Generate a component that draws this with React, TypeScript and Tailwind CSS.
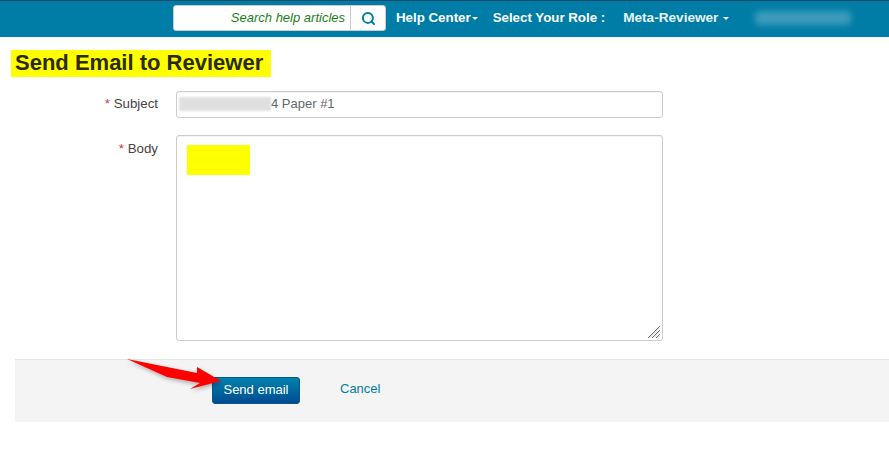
import { Search } from 'lucide-react';

function Caret() {
  return <span className="ml-[1px] inline-block h-0 w-0 border-x-[3px] border-t-[3px] border-x-transparent border-t-white align-middle" />;
}

export default function App() {
  return (
    <div className="relative h-[449px] w-[889px] overflow-hidden bg-white font-['Liberation_Sans',Arial,sans-serif] text-[13px] text-[#333]">
      <header className="flex h-[37px] items-center border-t border-t-[#1d4a68] bg-[#007da6] pb-[2px] pl-[173px] text-white shadow-[0_1px_3px_rgba(0,0,0,0.08)]">
        <div className="flex h-[26px] w-[213px] overflow-hidden rounded-[3px] border border-[#ccc] bg-white">
          <div className="flex-1 pr-[5px] text-right text-[13px] leading-[23px] text-[#1a7f1a] italic">Search help articles</div>
          <div className="flex w-[35px] items-center justify-center border-l border-[#ccc]">
            <Search size={15} strokeWidth={3.2} className="text-[#007da6]" />
          </div>
        </div>
        <span className="ml-[10px] text-[13.3px] font-bold">Help Center<Caret /></span>
        <span className="ml-[15px] text-[13.3px] font-bold">Select Your Role :</span>
        <span className="ml-[18px] text-[13.6px] font-bold text-[#e6f4fa]">Meta-Reviewer <Caret /></span>
        <span className="ml-[26px] h-[14px] w-[96px] rounded-sm bg-[#3d9bbb] blur-[3px]" />
      </header>

      <div className="pt-[13px] pl-[11px]">
        <h1 className="h-[27px] w-[260px] bg-[#ffff00] pl-[4px] text-[22px] leading-[26px] font-bold whitespace-nowrap text-[#2b2b00]">Send Email to Reviewer</h1>
      </div>

      <div className="mt-[14px] flex">
        <label className="w-[158px] pt-[4px] text-right text-[13.3px] leading-[17px] text-[#444]"><span className="text-[#b94a48]">*</span> Subject</label>
        <div className="ml-[18px] flex h-[27px] w-[487px] items-center rounded-[3px] border border-[#ccc] pb-[1px] pl-[2px] text-[#666] shadow-[inset_0_1px_1px_rgba(0,0,0,0.05)]">
          <span className="h-[14px] w-[92px] bg-[#e0e0e0] blur-[1px]" />
          <span>4 Paper #1</span>
        </div>
      </div>

      <div className="mt-[17px] flex">
        <label className="w-[158px] pt-[5px] text-right text-[13.3px] leading-[17px] text-[#444]"><span className="text-[#c0392b]">*</span> Body</label>
        <div className="relative ml-[18px] h-[206px] w-[487px] rounded-[3px] border border-[#ccc] pt-[9px] pl-[10px] shadow-[inset_0_1px_1px_rgba(0,0,0,0.05)]">
          <div className="h-[30px] w-[63px] bg-[#ffff00]" />
          <svg className="absolute right-[1px] bottom-[1px]" width="14" height="14" viewBox="0 0 14 14" stroke="#777" strokeWidth="1">
            <path d="M1 13 13 1M5 13 13 5M9 13 13 9" />
            <path d="M2.5 13 13 2.5M6.5 13 13 6.5M10.5 13 13 10.5" stroke="#ccc" />
          </svg>
        </div>
      </div>

      <div className="mt-[18px] ml-[15px] flex h-[63px] items-start border-t border-[#e5e5e5] bg-[#f4f4f4] pt-[17px] pl-[197px]">
        <button type="button" className="h-[27px] w-[88px] rounded-[3px] border border-[#04568c] bg-gradient-to-b from-[#0082ad] to-[#004b91] pb-[1px] text-[13px] text-white">Send email</button>
        <a className="ml-[40px] pt-[2px] text-[13px] text-[#007da6]">Cancel</a>
      </div>

      <svg className="absolute top-[356px] left-[124px] drop-shadow-[1px_2px_2px_rgba(0,0,0,0.3)]" width="100" height="38" viewBox="0 0 100 38" fill="#ff0000">
        <path d="M3 3 73 17 73 11 97 25 66 33 76 27 43 21Z" />
      </svg>
    </div>
  );
}
